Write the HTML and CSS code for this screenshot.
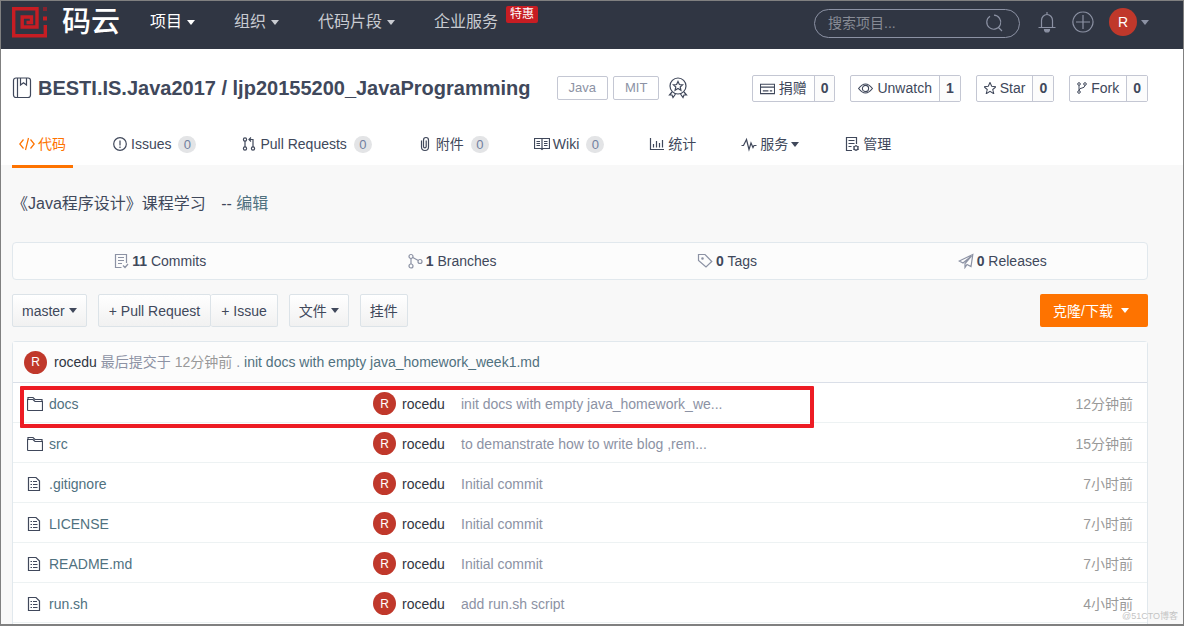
FILE: index.html
```html
<!DOCTYPE html>
<html lang="zh-CN">
<head>
<meta charset="utf-8">
<title>BESTI.IS.Java2017 / ljp20155200_JavaProgramming</title>
<meta name="viewport" content="width=device-width, initial-scale=1">
<link rel="stylesheet" href="styles.css">
</head>
<body>
<svg class="sprite" aria-hidden="true">
  <symbol id="i-folder" viewBox="0 0 16 16"><path d="M.5 14.500V3.500H1V1.500H6L8 3.500H15V5M.5 14.500H15.500V5.500H8L6 3.500H.5"/></symbol>
  <symbol id="i-file" viewBox="1 0 16 16"><path d="M2.500 1.500H10L13.500 5V14.500H2.500ZM4.500 5.500H6M7 5.500H11M4.500 8.500H6M7 8.500H11.500M4.500 11.500H6M7 11.500H11.500"/></symbol>
</svg>
<div class="page">
  <header class="topbar">
    <a class="logo" href="#">
      <svg class="logo-mark" viewBox="0 0 36 31" aria-hidden="true">
        <path d="M0 1.700H25V20H10.200V10H19.500V15.500H14.500M1.700 0V28.800H33.300V18" fill="none" stroke="#c71d23" stroke-width="3.400"/>
        <path d="M31 9.500H35V13.500H31Z" fill="#c71d23"/><path d="M31 0H35V4H31Z" fill="#84242f"/>
      </svg>
      <span class="logo-text">码云</span>
    </a>
    <nav class="topnav">
      <a class="current" href="#">项目<i class="caret"></i></a>
      <a href="#">组织<i class="caret"></i></a>
      <a href="#">代码片段<i class="caret"></i></a>
      <a href="#">企业服务<span class="promo">特惠</span></a>
    </nav>
    <form class="search">
      <input type="text" placeholder="搜索项目..." aria-label="搜索项目">
      <button type="button" aria-label="搜索"><svg class="icon" viewBox="0 0 18 18"><path d="M5 2.300A7 7 0 1 0 9 1.200M13 13L17 17"/></svg></button>
    </form>
    <button class="bare bell" type="button" aria-label="通知"><svg class="icon" viewBox="0 0 18 22"><path d="M3.500 16V9.500A5.500 6 0 0 1 14.500 9.500V16M.5 16.500H17.500M9 3.500V1"/><path d="M6.500 18.500A2.500 2.500 0 0 0 11.500 18.500Z" fill="currentColor"/></svg></button>
    <button class="bare plus" type="button" aria-label="新建"><svg class="icon" viewBox="0 0 22 22"><path d="M11 1A10 10 0 1 1 10.900 1M11 4V18M4 11H18"/></svg></button>
    <button class="bare user" type="button" aria-label="用户菜单"><span class="avatar avatar-lg">R</span><i class="caret"></i></button>
  </header>

  <section class="repo-head">
    <div class="title-row">
      <svg class="icon book" viewBox="0 0 20 22"><rect x="1.500" y="1" width="17" height="19.500" rx="2.500"/><path d="M5.500 1V20.500M8.500 1V8L11.500 5.800L14.500 8V1"/></svg>
      <h1><a href="#">BESTI.IS.Java2017</a> / <a href="#">ljp20155200_JavaProgramming</a></h1>
      <a class="label" href="#">Java</a>
      <a class="label" href="#">MIT</a>
      <svg class="icon medal" viewBox="0 0 20 22"><circle cx="10" cy="9" r="8"/><path d="M10 4.500L11.400 7.500L14.600 7.800L12.200 10L12.900 13.200L10 11.500L7.100 13.200L7.800 10L5.400 7.800L8.600 7.500ZM4 15L1.500 18L4 18L5 20.500L7.500 17M16 15L18.500 18L16 18L15 20.500L12.500 17"/></svg>
      <div class="actions">
        <div class="action"><button type="button"><svg class="icon" viewBox="0 0 16 16"><path d="M.5 3.500H15.500V13.500H.5ZM.5 6.500H15.500M3 10.500H9M10.500 10.500H13"/></svg>捐赠</button><a href="#">0</a></div>
        <div class="action"><button type="button"><svg class="icon" viewBox="0 0 16 16"><path d="M.6 8Q8-1.500 15.400 8Q8 17.500.6 8Z"/><circle cx="8" cy="8" r="3.300"/></svg>Unwatch</button><a href="#">1</a></div>
        <div class="action"><button type="button"><svg class="icon star" viewBox="1 1 14 14"><path d="M8 1.500L10 6L15 6.500L11.200 9.800L12.400 14.700L8 12L3.600 14.700L4.800 9.800L1 6.500L6 6Z"/></svg>Star</button><a href="#">0</a></div>
        <div class="action"><button type="button"><svg class="icon fork" viewBox="0 0 10 12"><circle cx="2" cy="2" r="1.300"/><circle cx="8" cy="2" r="1.300"/><circle cx="2" cy="10" r="1.300"/><path d="M2 3.300V8.700M8 3.300Q7.500 6 5 6Q2.500 6 2 8.500"/></svg>Fork</button><a href="#">0</a></div>
      </div>
    </div>
    <nav class="tabs">
      <a class="active" href="#"><svg class="icon" viewBox="0 0 16 16"><path d="M4.500 3.500L.8 8L4.500 12.500M11.500 3.500L15.200 8L11.500 12.500M9.500 2L6.500 14"/></svg>代码</a>
      <a href="#"><svg class="icon" viewBox="0 0 16 16"><circle cx="8" cy="8" r="6.300"/><path d="M8 4.500V9.500M8 10.500V12"/></svg>Issues<span class="count">0</span></a>
      <a href="#"><svg class="icon" viewBox="0 0 16 16"><circle cx="4" cy="3.500" r="1.600"/><circle cx="4" cy="12.500" r="1.600"/><circle cx="12" cy="12.500" r="1.600"/><path d="M4 5V11M12 11V3.500H8M10 1.500L8 3.500L10 5.500"/></svg>Pull Requests<span class="count">0</span></a>
      <a href="#"><svg class="icon" viewBox="0 0 16 16"><path d="M4.500 4.500V11A3.500 3.500 0 0 0 11.500 11V4A2.500 2.500 0 0 0 6.500 4V10.500A1.300 1.300 0 0 0 9.200 10.500V4.500"/></svg>附件<span class="count">0</span></a>
      <a href="#"><svg class="icon" viewBox="0 0 16 16"><path d="M.5 2.500H15.500V12.500H9L8 13.500L7 12.500H.5ZM8 2.500V13M2.500 5.500H6M2.500 7.500H6M2.500 9.500H6M10 5.500H13.500M10 7.500H13.500M10 9.500H13.500"/></svg>Wiki<span class="count">0</span></a>
      <a href="#"><svg class="icon" viewBox="0 0 16 16"><path d="M1.500 2V13.500H15M4.500 8V11.500M7.500 5V11.500M10.500 7V11.500M13.500 4V11.500"/></svg>统计</a>
      <a href="#"><svg class="icon" viewBox="0 0 16 16"><path d="M.5 9.500H2.500L5.500 3.500L8 13.500L10 7L12 11.500L13 9.500H15.500"/></svg>服务<i class="caret"></i></a>
      <a href="#"><svg class="icon" viewBox="0 0 16 16"><path d="M8 14.500H2.500V1.500H12.500V8M4.500 4.500H10.500M4.500 7.500H10.500M4.500 10.500H7.500"/><circle cx="12" cy="12" r="2"/><path d="M12 9V10M12 14V15M9.300 10.500L10.200 11M14.700 10.500L13.800 11M9.300 13.500L10.200 13M14.700 13.500L13.800 13"/></svg>管理</a>
    </nav>
  </section>

  <main class="content">
    <p class="desc">《Java程序设计》课程学习 <span class="edit">-- <a href="#">编辑</a></span></p>
    <div class="stats">
      <a href="#"><svg class="icon" viewBox="0 0 16 16"><path d="M8.500 14.500H2.500V1.500H13.500V10M5 4.500H11M5 7.500H11M5 10.500H9M10 12.500L12 14.500L15 11"/></svg><span><b>11</b> Commits</span></a>
      <a href="#"><svg class="icon" viewBox="0 0 16 16"><circle cx="4" cy="3.500" r="2"/><circle cx="4" cy="13" r="2"/><circle cx="13" cy="8.500" r="2"/><path d="M4 5.500V11M5.800 4.500L11.300 7.500"/></svg><span><b>1</b> Branches</span></a>
      <a href="#"><svg class="icon" viewBox="0 0 16 16"><path d="M1.500 1.500H8L14.800 8.500L9 14L1.500 7.500Z"/><circle cx="5.500" cy="5.500" r=".7"/></svg><span><b>0</b> Tags</span></a>
      <a href="#"><svg class="icon" viewBox="0 0 16 16"><path d="M14.800 1.500L1.200 8L5 10L13.500 3L7 10.500V14.500L9 11.500L13 13.500Z"/></svg><span><b>0</b> Releases</span></a>
    </div>
    <div class="toolbar">
      <button class="btn" type="button">master<i class="caret"></i></button>
      <div class="btn-group"><button class="btn" type="button">+ Pull Request</button><button class="btn" type="button">+ Issue</button></div>
      <button class="btn" type="button">文件<i class="caret"></i></button>
      <button class="btn" type="button">挂件</button>
      <button class="btn clone" type="button">克隆/下载<i class="caret"></i></button>
    </div>
    <div class="files">
      <div class="last-commit"><span class="avatar">R</span><a class="author" href="#">rocedu</a><span class="muted">最后提交于 <span class="ago">12分钟前</span> .</span><a class="link" href="#">init docs with empty java_homework_week1.md</a></div>
      <table>
        <colgroup><col class="c-name"><col class="c-author"><col class="c-msg"><col class="c-time"></colgroup>
        <tbody>
          <tr><td><a class="name" href="#"><svg class="icon"><use href="#i-folder"/></svg>docs</a></td><td><a class="who" href="#"><span class="avatar">R</span>rocedu</a></td><td class="muted">init docs with empty java_homework_we...</td><td class="time">12分钟前</td></tr>
          <tr><td><a class="name" href="#"><svg class="icon"><use href="#i-folder"/></svg>src</a></td><td><a class="who" href="#"><span class="avatar">R</span>rocedu</a></td><td class="muted">to demanstrate how to write blog ,rem...</td><td class="time">15分钟前</td></tr>
          <tr><td><a class="name" href="#"><svg class="icon"><use href="#i-file"/></svg>.gitignore</a></td><td><a class="who" href="#"><span class="avatar">R</span>rocedu</a></td><td class="muted">Initial commit</td><td class="time">7小时前</td></tr>
          <tr><td><a class="name" href="#"><svg class="icon"><use href="#i-file"/></svg>LICENSE</a></td><td><a class="who" href="#"><span class="avatar">R</span>rocedu</a></td><td class="muted">Initial commit</td><td class="time">7小时前</td></tr>
          <tr><td><a class="name" href="#"><svg class="icon"><use href="#i-file"/></svg>README.md</a></td><td><a class="who" href="#"><span class="avatar">R</span>rocedu</a></td><td class="muted">Initial commit</td><td class="time">7小时前</td></tr>
          <tr><td><a class="name" href="#"><svg class="icon"><use href="#i-file"/></svg>run.sh</a></td><td><a class="who" href="#"><span class="avatar">R</span>rocedu</a></td><td class="muted">add run.sh script</td><td class="time">4小时前</td></tr>
        </tbody>
      </table>
      <div class="highlight"></div>
    </div>
  </main>
  <div class="watermark">@51CTO博客</div>
</div>
</body>
</html>
```

FILE: styles.css
```css
* { box-sizing: border-box; }
body {
  margin: 0;
  font: 14px/20px "Liberation Sans", "Noto Sans CJK SC", sans-serif;
  color: #40485b;
  background: #f8f8f8;
}
a { color: inherit; text-decoration: none; }
button, input { font: inherit; color: inherit; }
button { cursor: pointer; }
.sprite { display: none; }
.icon {
  width: 16px;
  height: 16px;
  flex: none;
  fill: none;
  stroke: currentColor;
  stroke-width: 1.2;
}
.caret {
  flex: none;
  border: 4px solid transparent;
  border-top: 5px solid currentColor;
  border-bottom: 0;
}
.page {
  position: relative;
  display: flex;
  flex-direction: column;
  min-height: 100vh;
  border: 1px solid #808080;
  border-bottom-width: 2px;
}

/* Top bar */
.topbar {
  display: flex;
  align-items: center;
  height: 48px;
  padding: 0 34px 6px 11px;
  background: #303643;
  color: #c9ccd2;
}
.logo { display: flex; align-items: center; gap: 14px; color: #fff; }
.logo-mark { width: 36px; height: 31px; }
.logo-text { font-size: 29px; line-height: 40px; font-weight: 500; }
.topnav { display: flex; gap: 39px; margin: 0 auto 0 30px; font-size: 16px; }
.topnav a { position: relative; display: flex; align-items: center; gap: 5px; white-space: nowrap; }
.topnav .current { color: #fff; }
.promo {
  position: absolute;
  left: 100%;
  top: -6px;
  margin-left: 8px;
  padding: 0 4px;
  border-radius: 2px;
  background: #c71d23;
  color: #fff;
  font-size: 12px;
  line-height: 17px;
}
.search {
  display: flex;
  align-items: center;
  width: 206px;
  height: 29px;
  margin: 2px 18px 0 16px;
  padding: 0 16px 0 13px;
  border: 1px solid #8c92a4;
  border-radius: 15px;
}
.search input {
  flex: 1;
  min-width: 0;
  padding: 0;
  border: 0;
  outline: 0;
  background: none;
}
.search input::placeholder { color: #878b95; opacity: 1; }
.search button, .bare { display: flex; align-items: center; padding: 0; border: 0; background: none; color: #8c92a4; }
.search .icon { width: 18px; height: 18px; }
.bell .icon { width: 18px; height: 22px; }
.plus { margin: 0 15px 0 16px; }
.plus .icon { width: 22px; height: 22px; }
.user { gap: 4px; }
.avatar {
  display: flex;
  align-items: center;
  justify-content: center;
  flex: none;
  width: 23px;
  height: 23px;
  border-radius: 50%;
  background: #c0382b;
  color: #fff;
  font-size: 12px;
}
.avatar-lg { width: 28px; height: 28px; font-size: 14px; }

/* Repository heading */
.repo-head { padding: 0 35px 0 11px; background: #fff; }
.title-row { display: flex; align-items: center; height: 78px; }
.book { width: 20px; height: 22px; }
h1 { margin: 0 26px 0 6px; font-size: 20px; line-height: 28px; white-space: nowrap; }
.label {
  min-width: 46px;
  margin-right: 5px;
  padding: 0 11px;
  border: 1px solid #c4c7d3;
  border-radius: 2px;
  color: #8c92a4;
  font-size: 13px;
  line-height: 22px;
  text-align: center;
}
.medal { width: 20px; height: 22px; margin-left: 4px; }
.actions { display: flex; gap: 15px; margin-left: auto; }
.action {
  display: flex;
  height: 27px;
  border: 1px solid #c4c7d3;
  border-radius: 2px;
  line-height: 25px;
}
.action button {
  display: flex;
  align-items: center;
  gap: 4px;
  padding: 0 7px;
  border: 0;
  background: none;
  white-space: nowrap;
}
.action .icon { width: 15px; height: 15px; }
.action .star { width: 12px; height: 12px; }
.action .fork { width: 10px; height: 12px; stroke-width: 1; }
.action > a {
  padding: 0 6px;
  border-left: 1px solid #c4c7d3;
  background: #fcfcfc;
  font-weight: bold;
}
.tabs { display: flex; gap: 33px; height: 38px; }
.tabs a {
  display: flex;
  align-items: center;
  gap: 3px;
  height: 41px;
  padding: 0 6px 7px;
  white-space: nowrap;
}
.tabs .active { padding: 0 7px 4px; border-bottom: 3px solid #fe7300; color: #fe7300; }
.count {
  min-width: 18px;
  margin-left: 4px;
  border-radius: 9px;
  background: #e3e4e6;
  color: #7180a0;
  font-size: 13px;
  line-height: 17px;
  text-align: center;
}

/* Content */
.content { flex: 1; display: flex; flex-direction: column; padding: 25px 35px 0 11px; }
.desc { margin: 0 0 24px; font-size: 16px; line-height: 28px; }
.edit { margin-left: 11px; }
.edit a, .link { color: #50717f; }
.stats {
  display: flex;
  justify-content: space-around;
  align-items: center;
  height: 38px;
  border: 1px solid #e1e8ed;
  border-radius: 4px;
  background: #fcfcfc;
}
.stats a { display: flex; align-items: center; gap: 3px; }
.stats .icon { color: #8c92a4; }
.toolbar { display: flex; gap: 11px; margin: 14px 0; }
.btn {
  display: flex;
  align-items: center;
  gap: 4px;
  height: 33px;
  padding: 0 9px;
  border: 1px solid #dce3e8;
  border-radius: 2px;
  background: linear-gradient(#fff, #f1f1f1);
  white-space: nowrap;
}
.btn-group { display: flex; }
.btn-group .btn { padding: 0 10px; }
.btn-group .btn + .btn { border-left: 0; }
.clone { gap: 8px; margin-left: auto; padding: 0 19px 0 13px; border: 0; background: #fe7300; color: #fff; }
.files {
  position: relative;
  flex: 1;
  border: 1px solid #e1e8ed;
  border-bottom: 0;
  border-radius: 4px 4px 0 0;
  background: #fff;
}
.last-commit {
  display: flex;
  align-items: center;
  gap: 4px;
  height: 41px;
  padding: 0 11px;
  border-bottom: 1px solid #dadfe8;
  background: #fcfcfc;
}
.author { margin-left: 3px; }
.author, .who { color: #2f3542; }
.muted { color: #8c92a4; }
.ago, .time { color: #999; }
table { width: 100%; table-layout: fixed; border-collapse: separate; border-spacing: 0; }
td { height: 40px; padding: 2px 0 0; border-bottom: 1px solid #edf2f3; white-space: nowrap; }
.c-name { width: 360px; }
.c-author { width: 88px; }
.c-time { width: 120px; }
.name, .who { display: flex; align-items: center; gap: 6px; }
.name { padding-left: 14px; color: #50717f; }
.name .icon { color: #40485b; }
.time { padding-right: 14px; text-align: right; }
.highlight {
  position: absolute;
  left: 7px;
  top: 44px;
  width: 794px;
  height: 42px;
  border: 4px solid #ed1c24;
  border-radius: 1px;
  pointer-events: none;
}
.watermark {
  position: absolute;
  right: 5px;
  bottom: 0;
  color: #c4c4c4;
  font-size: 9px;
  line-height: 16px;
}
```
